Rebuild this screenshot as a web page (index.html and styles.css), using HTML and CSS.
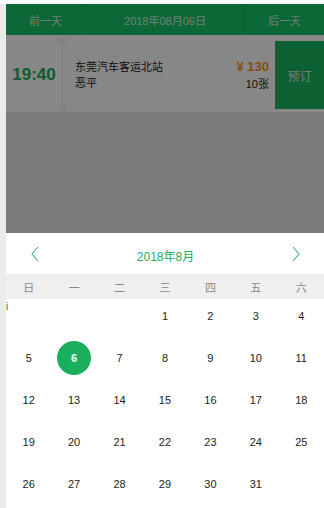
FILE: index.html
```html
<!DOCTYPE html>
<html lang="zh-CN">

<head>
    <meta charset="UTF-8">
    <meta name="viewport" content="width=device-width, initial-scale=1.0">
    <title>车票预订</title>
    <link rel="stylesheet" href="styles.css">
</head>

<body>
    <div class="page">
        <nav class="day-nav">
            <a href="#">前一天</a>
            <a href="#" class="current">2018年08月06日</a>
            <a href="#">后一天</a>
        </nav>

        <div class="list">
            <div class="ticket">
                <div class="time">19:40</div>
                <div class="route">
                    <p>东莞汽车客运北站</p>
                    <p>恶平</p>
                </div>
                <div class="price">
                    <span class="amount">¥ 130</span>
                    <span class="left">10张</span>
                </div>
                <button class="book">预订</button>
            </div>
        </div>

        <div class="mask"></div>

        <div class="calendar">
            <div class="cal-head">
                <svg width="10" height="16" viewBox="0 0 10 16"><path d="M8 1 L2 8 L8 15" fill="none" stroke="#3fb67e" stroke-width="1.1"/></svg>
                <span class="month">2018年8月</span>
                <svg width="10" height="16" viewBox="0 0 10 16"><path d="M2 1 L8 8 L2 15" fill="none" stroke="#3fb67e" stroke-width="1.1"/></svg>
            </div>
            <div class="weekdays">
                <span>日</span><span>一</span><span>二</span><span>三</span><span>四</span><span>五</span><span>六</span>
            </div>
            <div class="dates">
                <i class="stray">i</i>
                <span></span><span></span><span></span>
                <span>1</span><span>2</span><span>3</span><span>4</span>
                <span>5</span><span class="active">6</span><span>7</span><span>8</span><span>9</span><span>10</span><span>11</span>
                <span>12</span><span>13</span><span>14</span><span>15</span><span>16</span><span>17</span><span>18</span>
                <span>19</span><span>20</span><span>21</span><span>22</span><span>23</span><span>24</span><span>25</span>
                <span>26</span><span>27</span><span>28</span><span>29</span><span>30</span><span>31</span>
            </div>
        </div>
    </div>
</body>

</html>
```

FILE: styles.css
```css
* {
    box-sizing: border-box;
}

body {
    margin: 0;
    padding-top: 4px;
    background: #fff;
    font-family: "Liberation Sans", "Noto Sans CJK SC", sans-serif;
}

.page {
    position: relative;
    height: 504px;
    border-left: 6px solid #ebebeb;
    background: #ebebeb;
    overflow: hidden;
}

.day-nav {
    display: flex;
    height: 31px;
    background: #17c566;
}

.day-nav a {
    flex: 1;
    display: flex;
    align-items: center;
    justify-content: center;
    color: rgba(255, 255, 255, 0.8);
    font-size: 11px;
    text-decoration: none;
    border-right: 1px solid rgba(0, 0, 0, 0.1);
}

.day-nav a.current {
    flex: 2;
}

.day-nav a:last-child {
    border-right: none;
}

.list {
    background: #fff;
    padding: 6px 0 3px;
}

.ticket {
    display: flex;
    height: 68px;
    background: #fff;
}

.time {
    position: relative;
    width: 57px;
    display: flex;
    align-items: center;
    justify-content: center;
    font-size: 17px;
    font-weight: bold;
    color: #1aae5c;
    border-right: 1px solid #f0f0f0;
}

.time::before,
.time::after {
    content: "";
    position: absolute;
    right: -5px;
    width: 8px;
    height: 8px;
    border-radius: 50%;
    background: #f3f3f3;
}

.time::before {
    top: -4px;
}

.time::after {
    bottom: -4px;
}

.route {
    flex: 1;
    display: flex;
    flex-direction: column;
    justify-content: center;
    padding-left: 12px;
    font-size: 11px;
    color: #222;
}

.route p {
    margin: 0;
    line-height: 16px;
}

.price {
    display: flex;
    flex-direction: column;
    justify-content: center;
    align-items: flex-end;
    padding-right: 6px;
}

.amount {
    color: #ff8f2a;
    font-size: 13px;
    font-weight: bold;
    line-height: 19px;
}

.left {
    color: #222;
    font-size: 11px;
    line-height: 17px;
}

.book {
    width: 49px;
    border: none;
    background: #17b65e;
    color: rgba(255, 255, 255, 0.85);
    font-family: inherit;
    font-size: 12px;
}

.mask {
    position: absolute;
    top: 0;
    left: 0;
    right: 0;
    height: 229px;
    background: rgba(0, 0, 0, 0.47);
}

.calendar {
    position: absolute;
    left: 0;
    right: 0;
    bottom: 0;
    height: 275px;
    background: #fff;
}

.cal-head {
    height: 41px;
    display: flex;
    align-items: center;
    justify-content: space-between;
    padding: 0 23px 0 24px;
}

.month {
    color: #1aae5c;
    font-size: 12px;
    padding-top: 3px;
}

.weekdays,
.dates {
    display: grid;
    grid-template-columns: repeat(7, 1fr);
}

.weekdays {
    height: 25px;
    background: #efefef;
    align-items: center;
    text-align: center;
    font-size: 11px;
    color: #888;
}

.dates {
    position: relative;
    row-gap: 8px;
    font-size: 11px;
    color: #222;
}

.dates span {
    height: 34px;
    display: flex;
    align-items: center;
    justify-content: center;
}

.dates span.active {
    width: 34px;
    margin: 0 auto;
    border-radius: 50%;
    background: #1aaf5c;
    color: #fff;
    font-weight: bold;
}

.stray {
    position: absolute;
    left: 0;
    top: 2px;
    font-style: normal;
    font-size: 10px;
    color: #555;
}
```
